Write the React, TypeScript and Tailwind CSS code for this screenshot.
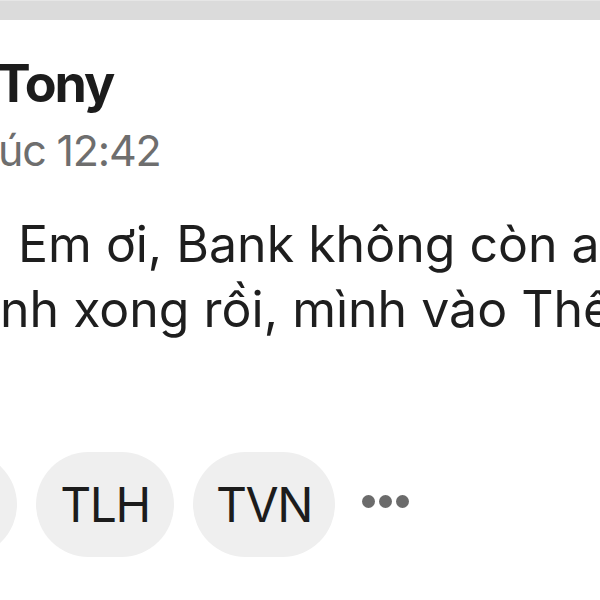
export default function App() {
  return (
    <div className="w-[600px] h-[600px] overflow-hidden bg-white font-['Inter','Noto_Sans',sans-serif] flex flex-col">
      {/* top bar */}
      <div className="h-[20px] shrink-0 bg-[#dbdbdb] border-t border-[#e6e6e6]" />

      {/* sender */}
      <div className="mt-[38px] ml-[-4px] text-[52px] leading-[52px] font-bold text-[#1c1c1c] tracking-[-2px] whitespace-nowrap">
        Tony
      </div>
      <div className="mt-[19px] ml-[-2px] text-[43px] leading-[43px] text-[#6e6e6e] tracking-[-1.2px] whitespace-nowrap">
        úc 12:42
      </div>

      {/* message */}
      <div className="mt-[40px] text-[50px] leading-[65px] text-[#1e1e1e] whitespace-nowrap">
        <div className="pl-[18px]">Em ơi, Bank không còn ai</div>
        <div>nh xong rồi, mình vào Thế</div>
      </div>

      {/* reactions */}
      <div className="mt-[110px] flex items-center gap-[19px] whitespace-nowrap">
        <div className="shrink-0 ml-[-121px] w-[138px] h-[105px] rounded-full bg-[#efefef]" />
        <div className="shrink-0 w-[138px] h-[105px] rounded-full bg-[#efefef] flex items-center justify-center text-[48px] tracking-[-1.5px] text-[#1c1c1c]">
          TLH
        </div>
        <div className="shrink-0 w-[142px] h-[105px] rounded-full bg-[#efefef] flex items-center justify-center text-[48px] tracking-[-1.5px] text-[#1c1c1c]">
          TVN
        </div>
        <div className="ml-[8px] mb-[7px] flex gap-[4px]">
          <span className="w-[13px] h-[13px] rounded-full bg-[#6b6b6b]" />
          <span className="w-[13px] h-[13px] rounded-full bg-[#6b6b6b]" />
          <span className="w-[13px] h-[13px] rounded-full bg-[#6b6b6b]" />
        </div>
      </div>
    </div>
  );
}
